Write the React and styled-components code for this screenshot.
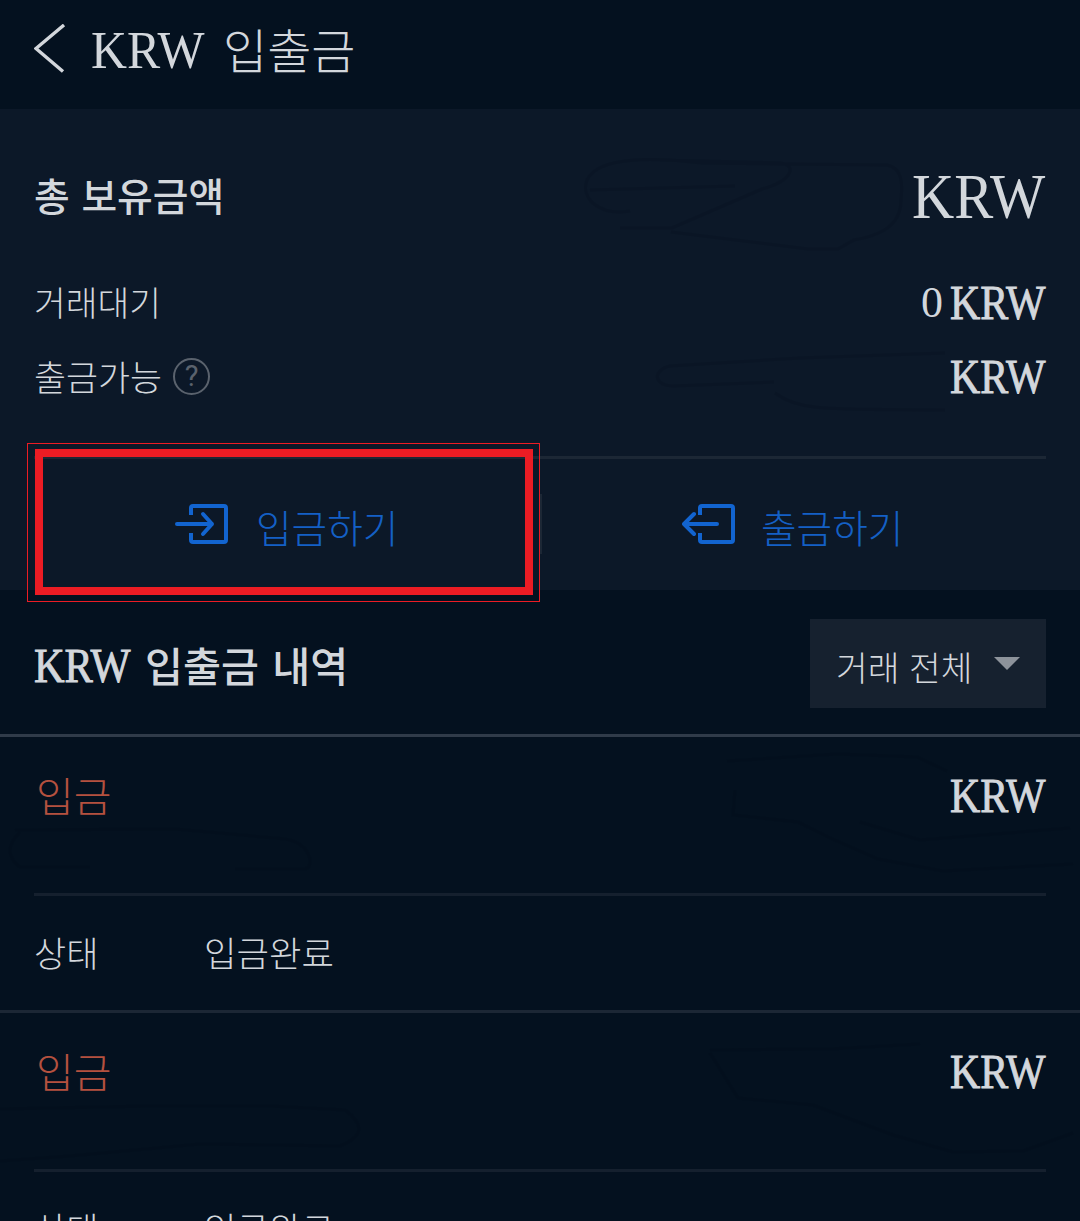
import React from 'react';
import styled, { createGlobalStyle } from 'styled-components';

const night = '#04111f';
const panel = '#0c1828';
const line = '#1c2735';
const text = '#d3d7dc';
const blue = '#1460c6';
const red = '#ec1c24';
const rust = '#b5513f';

const GlobalStyle = createGlobalStyle`
  *, *::before, *::after {
    box-sizing: border-box;
  }

  body {
    margin: 0;
    background: ${night};
    color: ${text};
    font-family: 'Liberation Serif', 'Noto Sans CJK KR', serif;
    font-weight: 300;
  }
`;

const Page = styled.div`
  position: relative;
  width: 1080px;
  height: 1221px;
  overflow: hidden;
  background: ${night};
`;

const Header = styled.header`
  display: flex;
  align-items: center;
  height: 109px;
  padding: 0 34px 12px;
`;

const BackIcon = styled.svg`
  width: 32px;
  height: 50px;
  margin-right: 25px;
  fill: none;
  stroke: ${text};
  stroke-width: 3.4;
`;

const Label = styled.span`
  padding-top: ${props => props.$drop || 0}px;
  color: ${props => props.$color || text};
  font-size: ${props => props.$size}px;
  font-weight: ${props => (props.$bold ? 500 : 300)};
  line-height: 1;
  word-spacing: ${props => props.$space || 0}px;
  white-space: nowrap;
`;

const Title = styled.h1`
  margin: 0 0 0 18px;
  padding-top: 8px;
  font-size: 48px;
  font-weight: 300;
  line-height: 1;
`;

// condensed currency code, 2.29em is the natural width of the three letters
const UnitBox = styled.span`
  width: ${props => props.$width}px;
  padding-top: ${props => props.$drop || 0}px;
  font-size: ${props => props.$size}px;
  line-height: 1;

  span {
    display: inline-block;
    transform: scaleX(${props => props.$width / (props.$size * 2.29)});
    transform-origin: left center;
    -webkit-text-stroke: ${props => (props.$heavy ? '0.9px' : '0')} ${text};
  }
`;

const Unit = ({ size = 48, width = 96, drop, heavy }) => (
  <UnitBox $size={size} $width={width} $drop={drop} $heavy={heavy}>
    <span>KRW</span>
  </UnitBox>
);

const Balance = styled.section`
  height: 481px;
  padding: 0 34px;
  background: ${panel};
`;

const BalanceRow = styled.div`
  display: flex;
  align-items: center;
  justify-content: space-between;
  height: ${props => (props.$total ? 157 : 74)}px;
  padding-top: ${props => (props.$total ? 18 : 0)}px;
`;

const Group = styled.div`
  display: flex;
  align-items: center;
  gap: ${props => props.$gap}px;
`;

const Help = styled.span`
  display: flex;
  align-items: center;
  justify-content: center;
  width: 37px;
  height: 37px;
  border: 2px solid #5a626d;
  border-radius: 50%;
  color: #5a626d;
  font: 400 29px/1 Roboto, sans-serif;
`;

const Actions = styled.div`
  display: grid;
  grid-template-columns: 1fr 1fr;
  height: 133px;
  margin-top: 42px;
  border-top: 3px solid ${line};
`;

const Action = styled.button`
  display: flex;
  position: relative;
  align-items: center;
  gap: ${props => props.$gap}px;
  height: 130px;
  padding: 0 0 0 ${props => props.$indent}px;
  border: 0;
  background: none;
  color: inherit;
  font: inherit;
`;

const ActionIcon = styled.svg`
  width: 54px;
  height: 42px;
  fill: none;
  stroke: #1264d0;
  stroke-width: 4;
  stroke-linecap: round;
  stroke-linejoin: round;

  .frame {
    stroke-linecap: butt;
  }
`;

const Separator = styled.span`
  position: absolute;
  right: -2px;
  top: 35px;
  width: 2px;
  height: 60px;
  background: ${line};
`;

const Highlight = styled.span`
  position: absolute;
  left: -7px;
  top: -16px;
  width: 513px;
  height: 159px;
  padding: 5px 6px 6px 7px;
  border: 1px solid ${red};

  &::before {
    content: '';
    display: block;
    height: 146px;
    border: 8px solid ${red};
  }
`;

const HistoryHead = styled.div`
  display: flex;
  align-items: center;
  justify-content: space-between;
  height: 147px;
  padding: 2px 34px 0;
  border-bottom: 3px solid #303b49;
`;

const Select = styled.button`
  display: flex;
  align-items: center;
  justify-content: space-between;
  width: 236px;
  height: 89px;
  padding: 0 26px;
  border: 0;
  background: #16212f;
  font: inherit;
`;

const Caret = styled.span`
  border: 13px solid transparent;
  border-top-color: #8d939b;
  border-bottom: 0;
`;

const Entry = styled.article`
  height: 276px;
  border-bottom: 3px solid ${line};
`;

const EntryTop = styled.div`
  display: flex;
  align-items: flex-start;
  justify-content: space-between;
  height: 159px;
  margin: 0 34px;
  padding: 35px 0 0 2px;
  border-bottom: 3px solid #15202e;
`;

const EntryStatus = styled.div`
  display: grid;
  grid-template-columns: 170px 1fr;
  align-items: center;
  height: 114px;
  padding: 0 34px;
`;

const Smudges = styled.svg`
  position: absolute;
  inset: 0;
  pointer-events: none;
  fill: none;
  stroke: #020b18;
  stroke-width: 3;
  opacity: 0.17;
`;

const entries = [
  { type: '입금', status: '입금완료' },
  { type: '입금', status: '입금완료' },
];

const App = () => (
  <Page>
    <GlobalStyle />
    <Header>
      <BackIcon viewBox="0 0 32 50"><path d="M30 1 2 24.5 29 47.5" /></BackIcon>
      <Unit size={53} width={114} drop={4} />
      <Title>입출금</Title>
    </Header>
    <Balance>
      <BalanceRow $total>
        <Label $size={38.8} $space={2} $drop={4} $bold>총 보유금액</Label>
        <Unit size={64} width={134} />
      </BalanceRow>
      <BalanceRow>
        <Label $size={34.5} $drop={3}>거래대기</Label>
        <Group $gap={7}>
          <Label $size={44}>0</Label>
          <Unit heavy />
        </Group>
      </BalanceRow>
      <BalanceRow>
        <Group $gap={11}>
          <Label $size={34.8} $drop={6}>출금가능</Label>
          <Help>?</Help>
        </Group>
        <Unit heavy />
      </BalanceRow>
      <Actions>
        <Action $indent={141} $gap={27}>
          <ActionIcon viewBox="0 0 54 42">
            <path className="frame" d="M16 12V5q0-2 2-2h31q2 0 2 2v32q0 2-2 2H18q-2 0-2-2v-7" />
            <path d="M2 21h35M28 11l9 10-9 10" />
          </ActionIcon>
          <Label $size={38.7} $color={blue} $drop={12}>입금하기</Label>
          <Separator />
          <Highlight />
        </Action>
        <Action $indent={142} $gap={25}>
          <ActionIcon viewBox="0 0 54 42">
            <path className="frame" d="M18 12V5q0-2 2-2h29q2 0 2 2v32q0 2-2 2H20q-2 0-2-2v-7" />
            <path d="M35 21H2M12 11 2 21l10 10" />
          </ActionIcon>
          <Label $size={38.7} $color={blue} $drop={12}>출금하기</Label>
        </Action>
      </Actions>
    </Balance>
    <HistoryHead>
      <Group $gap={14}>
        <Unit width={97} drop={6} heavy />
        <Label $size={41.3} $space={3} $drop={12} $bold>입출금 내역</Label>
      </Group>
      <Select>
        <Label $size={34.5} $space={1} $drop={12}>거래 전체</Label>
        <Caret />
      </Select>
    </HistoryHead>
    {entries.map((entry, i) => (
      <Entry key={i}>
        <EntryTop>
          <Label $size={41} $color={rust} $drop={6}>{entry.type}</Label>
          <Unit heavy />
        </EntryTop>
        <EntryStatus>
          <Label $size={35} $drop={5}>상태</Label>
          <Label $size={35.3} $drop={5}>{entry.status}</Label>
        </EntryStatus>
      </Entry>
    ))}
    <Smudges viewBox="0 0 1080 1221" width="1080" height="1221">
      <path d="M630 211c-30 5-50-12-43-31 12-25 70-22 115-17l185 2c14 3 16 15 14 35 0 27-23 36-47 40l-16 9-30 0-137-17M590 190l145-4M620 228h52l90-39c30-8 36-24 18-26l-120-3" />
      <path d="M945 353l-145 5-130 8c-18 4-17 20 4 20l100-4M775 393c25 19 55 16 170 17" />
      <path d="M20 832q-20 20 0 35h70M15 830l160-1 110 10c26 4 30 28 20 30h-70" />
      <path d="M727 761l110-7 80 3 30 14M735 790l-2 25 65 7 30 15 50 22 65 12 130-7M860 822l60 18 150-12" />
      <path d="M0 1109l150-3 120 0 75 4q30 22-5 36l-140-2-130 12-70 5M710 1050l120-1 90-5M710 1053l28 45 75 7 80 30 60 17 70-1 50-18" />
    </Smudges>
  </Page>
);

export default App;
